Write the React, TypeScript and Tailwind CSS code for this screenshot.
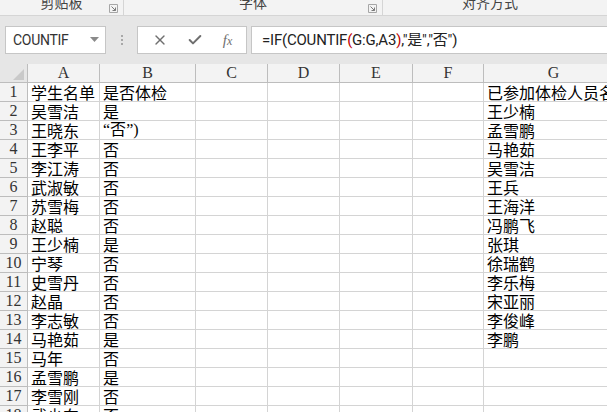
import { X, Check } from "lucide-react";

const colWidths = [28, 72, 96, 72, 72, 73, 71, 140];
const letters = ["A", "B", "C", "D", "E", "F", "G"];

const colA = [
  "学生名单", "吴雪洁", "王晓东", "王李平", "李江涛", "武淑敏", "苏雪梅", "赵聪", "王少楠",
  "宁琴", "史雪丹", "赵晶", "李志敏", "马艳茹", "马年", "孟雪鹏", "李雪刚", "武少东",
];
const colB = [
  "是否体检", "是", "“否”)", "否", "否", "否", "否", "否", "是",
  "否", "否", "否", "否", "是", "否", "是", "否", "否",
];
const colG = [
  "已参加体检人员名单", "王少楠", "孟雪鹏", "马艳茹", "吴雪洁", "王兵", "王海洋", "冯鹏飞", "张琪",
  "徐瑞鹤", "李乐梅", "宋亚丽", "李俊峰", "李鹏",
];

function Launcher() {
  return (
    <svg width="9" height="9" viewBox="0 0 9 9" className="absolute right-[5px] top-[4px]">
      <path d="M0.5 0.5H8.5V8.5H0.5Z" fill="none" stroke="#a6a6a6" />
      <path d="M2.5 2.5L6.5 6.5M6.5 3.5V6.5H3.5" fill="none" stroke="#7a7a7a" />
    </svg>
  );
}

function RibbonGroup({ label, width, launcher }: { label: string; width: number; launcher?: boolean }) {
  return (
    <div
      className="relative h-full shrink-0 border-r border-[#d5d5d5] flex justify-center"
      style={{ width }}
    >
      <span className="-mt-[7px] text-[14px] leading-[18px] text-[#444]">{label}</span>
      {launcher && <Launcher />}
    </div>
  );
}

function CellText({ text }: { text: string }) {
  if (text.startsWith("“")) {
    return (
      <span>
        <span style={{ fontFamily: '"Liberation Serif", serif' }}>“</span>否
        <span style={{ fontFamily: '"Liberation Serif", serif' }}>”)</span>
      </span>
    );
  }
  return <span>{text}</span>;
}

export default function App() {
  const rows = Array.from({ length: 18 }, (_, i) => i);
  return (
    <div
      className="w-[607px] h-[412px] overflow-hidden bg-white"
      style={{ fontFamily: '"Noto Sans CJK SC", sans-serif' }}
    >
      {/* ribbon bottom strip */}
      <div className="h-[16px] bg-[#f3f3f3] border-b border-[#d5d5d5] flex overflow-hidden">
        <RibbonGroup label="剪贴板" width={124} launcher />
        <RibbonGroup label="字体" width={259} launcher />
        <div className="flex-1 flex justify-center pr-[10px]">
          <span className="-mt-[7px] text-[14px] leading-[18px] text-[#444]">对齐方式</span>
        </div>
      </div>

      {/* formula bar */}
      <div className="h-[48px] bg-[#e6e6e6] flex items-start pt-[10px] pl-[5px]">
        <div className="w-[101px] h-[28px] bg-white border border-[#c6c6c6] flex items-center pl-[7px] pr-[6px] justify-between">
          <span className="text-[14px] text-[#333] tracking-[-0.3px]" style={{ fontFamily: "Roboto, sans-serif" }}>
            COUNTIF
          </span>
          <svg width="9" height="6" viewBox="0 0 9 6">
            <path d="M0 0H9L4.5 5Z" fill="#8a8a8a" />
          </svg>
        </div>
        <div className="w-[31px] h-[28px] flex flex-col items-center justify-center gap-[2px]">
          <span className="w-[2px] h-[2px] bg-[#a8a8a8]" />
          <span className="w-[2px] h-[2px] bg-[#a8a8a8]" />
          <span className="w-[2px] h-[2px] bg-[#a8a8a8]" />
        </div>
        <div className="w-[110px] h-[28px] bg-white border border-[#c6c6c6] flex items-center justify-around px-[4px] text-[#6f6f6f]">
          <X size={16} strokeWidth={2} />
          <Check size={16} strokeWidth={3} />
          <span
            className="italic text-[15px] leading-none text-[#6f6f6f]"
            style={{ fontFamily: '"Liberation Serif", serif' }}
          >
            f<span className="text-[12px]">x</span>
          </span>
        </div>
        <div className="ml-[4px] flex-1 h-[28px] bg-white border border-[#c6c6c6] border-r-0 flex items-center pl-[10px]">
          <span
            className="text-[15px] text-[#222] tracking-[-0.2px] whitespace-nowrap"
            style={{ fontFamily: 'Roboto, "Noto Sans CJK SC", sans-serif' }}
          >
            =IF(COUNTIF<span className="text-[#c00000]">(</span>G:G,A3<span className="text-[#c00000]">)</span>,"是","否")
          </span>
        </div>
      </div>

      {/* sheet */}
      <div className="flex flex-col">
        {/* column header */}
        <div className="flex h-[19px]">
          <div
            className="relative shrink-0 bg-[#e6e6e6] border-r border-b border-[#bdbdbd]"
            style={{ width: colWidths[0] }}
          >
            <svg width="11" height="11" viewBox="0 0 11 11" className="absolute right-[3px] bottom-[2px]">
              <path d="M11 0V11H0Z" fill="#c9c9c9" />
            </svg>
          </div>
          {letters.map((l, i) => (
            <div
              key={l}
              className="shrink-0 bg-[#f3f3f3] border-r border-b border-[#bdbdbd] flex items-end justify-center text-[16px] leading-[18px] text-[#333]"
              style={{ width: colWidths[i + 1], fontFamily: '"Liberation Serif", serif' }}
            >
              {l}
            </div>
          ))}
        </div>
        {rows.map((r) => (
          <div key={r} className="flex h-[19px]">
            <div
              className="shrink-0 bg-[#f3f3f3] border-r border-b border-[#bdbdbd] flex items-end justify-center text-[16px] leading-[18px] text-[#333]"
              style={{ width: colWidths[0], fontFamily: '"Liberation Serif", serif' }}
            >
              {r + 1}
            </div>
            {letters.map((l, i) => {
              const text = l === "A" ? colA[r] : l === "B" ? colB[r] : l === "G" ? colG[r] ?? "" : "";
              return (
                <div
                  key={l}
                  className="shrink-0 border-r border-b border-[#d4d4d4] flex items-end pl-[3px] text-[16px] leading-[18px] text-black whitespace-nowrap"
                  style={{ width: colWidths[i + 1] }}
                >
                  <CellText text={text} />
                </div>
              );
            })}
          </div>
        ))}
      </div>
    </div>
  );
}
